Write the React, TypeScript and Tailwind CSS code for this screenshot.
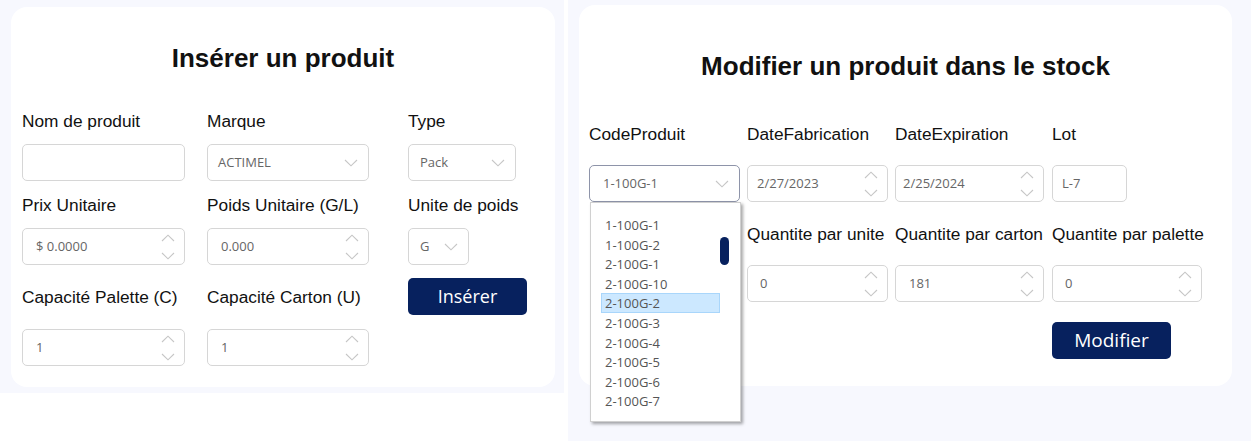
import React from "react";

const navy = "bg-[#07215e]";

function Chevron({ up = false }: { up?: boolean }) {
  return (
    <svg width="14" height="8" viewBox="0 0 14 8" className="block">
      <path
        d={up ? "M1 7L7 1.2L13 7" : "M1 1L7 6.8L13 1"}
        fill="none"
        stroke="#c6c6c6"
        strokeWidth="1.1"
      />
    </svg>
  );
}

type Kind = "text" | "select" | "spin";

function Box({
  value = "",
  kind = "text",
  focused = false,
  className = "",
  pad = "pl-3",
}: {
  value?: string;
  kind?: Kind;
  focused?: boolean;
  className?: string;
  pad?: string;
}) {
  return (
    <div
      className={`flex h-[37px] items-center rounded-[5px] border bg-white ${
        focused ? "border-[#8e94a9]" : "border-[#d6d6d6]"
      } ${className}`}
    >
      <span className={`flex-1 ${pad} font-['Open_Sans',sans-serif] text-[13px] text-[#666]`}>{value}</span>
      {kind === "select" && (
        <div className="mr-[10px]">
          <Chevron />
        </div>
      )}
      {kind === "spin" && (
        <div className="mr-[9px] flex flex-col gap-[10px]">
          <Chevron up />
          <Chevron />
        </div>
      )}
    </div>
  );
}

function Label({ children }: { children: React.ReactNode }) {
  return <div className="h-6 whitespace-nowrap text-[17.3px] leading-6 text-[#111]">{children}</div>;
}

const codes = [
  "1-100G-1",
  "1-100G-2",
  "2-100G-1",
  "2-100G-10",
  "2-100G-2",
  "2-100G-3",
  "2-100G-4",
  "2-100G-5",
  "2-100G-6",
  "2-100G-7",
];

function CodeList() {
  return (
    <div className="absolute left-[1px] top-full z-10 h-[220px] w-[151px] border border-[#d0d0d0] bg-white pl-[10px] pt-[12px] shadow-[2px_2px_3px_rgba(0,0,0,0.35)]">
      {codes.map((c) => (
        <div
          key={c}
          className={`h-[19.6px] w-[119px] pl-[3px] font-['Open_Sans',sans-serif] text-[13px] leading-[18px] text-[#555] ${
            c === "2-100G-2" ? "border border-[#a9d6fb] bg-[#cce8ff]" : "border border-transparent"
          }`}
        >
          {c}
        </div>
      ))}
      <div className={`absolute left-[129px] top-[34px] h-[28px] w-[9px] rounded-full ${navy}`} />
    </div>
  );
}

export default function App() {
  return (
    <div className="flex h-[441px] w-[1251px] bg-white font-['Liberation_Sans',Arial,sans-serif]">
      {/* Insérer */}
      <div className="h-[393px] w-[564px] bg-[#f7f8fe] pl-[11px] pt-[7px]">
        <div className="h-[380px] w-[544px] rounded-[16px] bg-white pt-[36px]">
          <h1 className="text-center text-[26px] font-bold leading-[30px] text-[#111]">Insérer un produit</h1>

          <div className="mt-[36px] flex pl-[11px]">
            <div className="w-[185px]">
              <Label>Nom de produit</Label>
              <Box className="mt-[11px] w-[163px]" />
            </div>
            <div className="w-[201px]">
              <Label>Marque</Label>
              <Box className="mt-[11px] w-[162px]" value="ACTIMEL" kind="select" pad="pl-[10px]" />
            </div>
            <div>
              <Label>Type</Label>
              <Box className="mt-[11px] w-[108px]" value="Pack" kind="select" pad="pl-[11px]" />
            </div>
          </div>

          <div className="mt-[12px] flex pl-[11px]">
            <div className="w-[185px]">
              <Label>Prix Unitaire</Label>
              <Box className="mt-[11px] w-[163px]" value="$ 0.0000" kind="spin" pad="pl-[13px]" />
            </div>
            <div className="w-[201px]">
              <Label>Poids Unitaire (G/L)</Label>
              <Box className="mt-[11px] w-[162px]" value="0.000" kind="spin" pad="pl-[13px]" />
            </div>
            <div>
              <Label>Unite de poids</Label>
              <Box className="mt-[11px] w-[61px]" value="G" kind="select" pad="pl-[11px]" />
            </div>
          </div>

          <div className="mt-[13px] flex pl-[11px]">
            <div className="w-[185px] pt-[7px]">
              <Label>Capacité Palette (C)</Label>
              <Box className="mt-[20px] w-[163px]" value="1" kind="spin" pad="pl-[13px]" />
            </div>
            <div className="w-[201px] pt-[7px]">
              <Label>Capacité Carton (U)</Label>
              <Box className="mt-[20px] w-[162px]" value="1" kind="spin" pad="pl-[13px]" />
            </div>
            <div>
              <button
                className={`h-[37px] w-[119px] rounded-[5px] ${navy} font-['Open_Sans',sans-serif] text-[18px] text-white`}
              >
                Insérer
              </button>
            </div>
          </div>
        </div>
      </div>

      <div className="w-[4px]" />

      {/* Modifier */}
      <div className="h-[441px] flex-1 bg-[#f7f8fe] pl-[11px] pt-[5px]">
        <div className="relative h-[381px] w-[653px] rounded-[16px] bg-white pt-[46px]">
          <h1 className="text-center text-[26px] font-bold leading-[30px] text-[#111]">
            Modifier un produit dans le stock
          </h1>

          <div className="mt-[41px] flex pl-[10px]">
            <div className="w-[158px]">
              <Label>CodeProduit</Label>
              <div className="relative mt-[19px] w-[151px]">
                <Box className="w-[151px]" value="1-100G-1" kind="select" focused pad="pl-[13px]" />
                <CodeList />
              </div>
            </div>
            <div className="w-[148px]">
              <Label>DateFabrication</Label>
              <Box className="mt-[19px] w-[141px]" value="2/27/2023" kind="spin" pad="pl-[9px]" />
            </div>
            <div className="w-[157px]">
              <Label>DateExpiration</Label>
              <Box className="mt-[19px] w-[149px]" value="2/25/2024" kind="spin" pad="pl-[7px]" />
            </div>
            <div>
              <Label>Lot</Label>
              <Box className="mt-[19px] w-[75px]" value="L-7" pad="pl-[9px]" />
            </div>
          </div>

          <div className="mt-[20px] flex pl-[168px]">
            <div className="w-[148px]">
              <Label>Quantite par unite</Label>
              <Box className="mt-[19px] w-[141px]" value="0" kind="spin" pad="pl-[12px]" />
            </div>
            <div className="w-[157px]">
              <Label>Quantite par carton</Label>
              <Box className="mt-[19px] w-[149px]" value="181" kind="spin" pad="pl-[13px]" />
            </div>
            <div>
              <Label>Quantite par palette</Label>
              <Box className="mt-[19px] w-[150px]" value="0" kind="spin" pad="pl-[12px]" />
            </div>
          </div>

          <div className="mt-[20px] pl-[473px]">
            <button
              className={`h-[37px] w-[119px] rounded-[5px] ${navy} font-['Open_Sans',sans-serif] text-[19px] text-white`}
            >
              Modifier
            </button>
          </div>
        </div>
      </div>
    </div>
  );
}
